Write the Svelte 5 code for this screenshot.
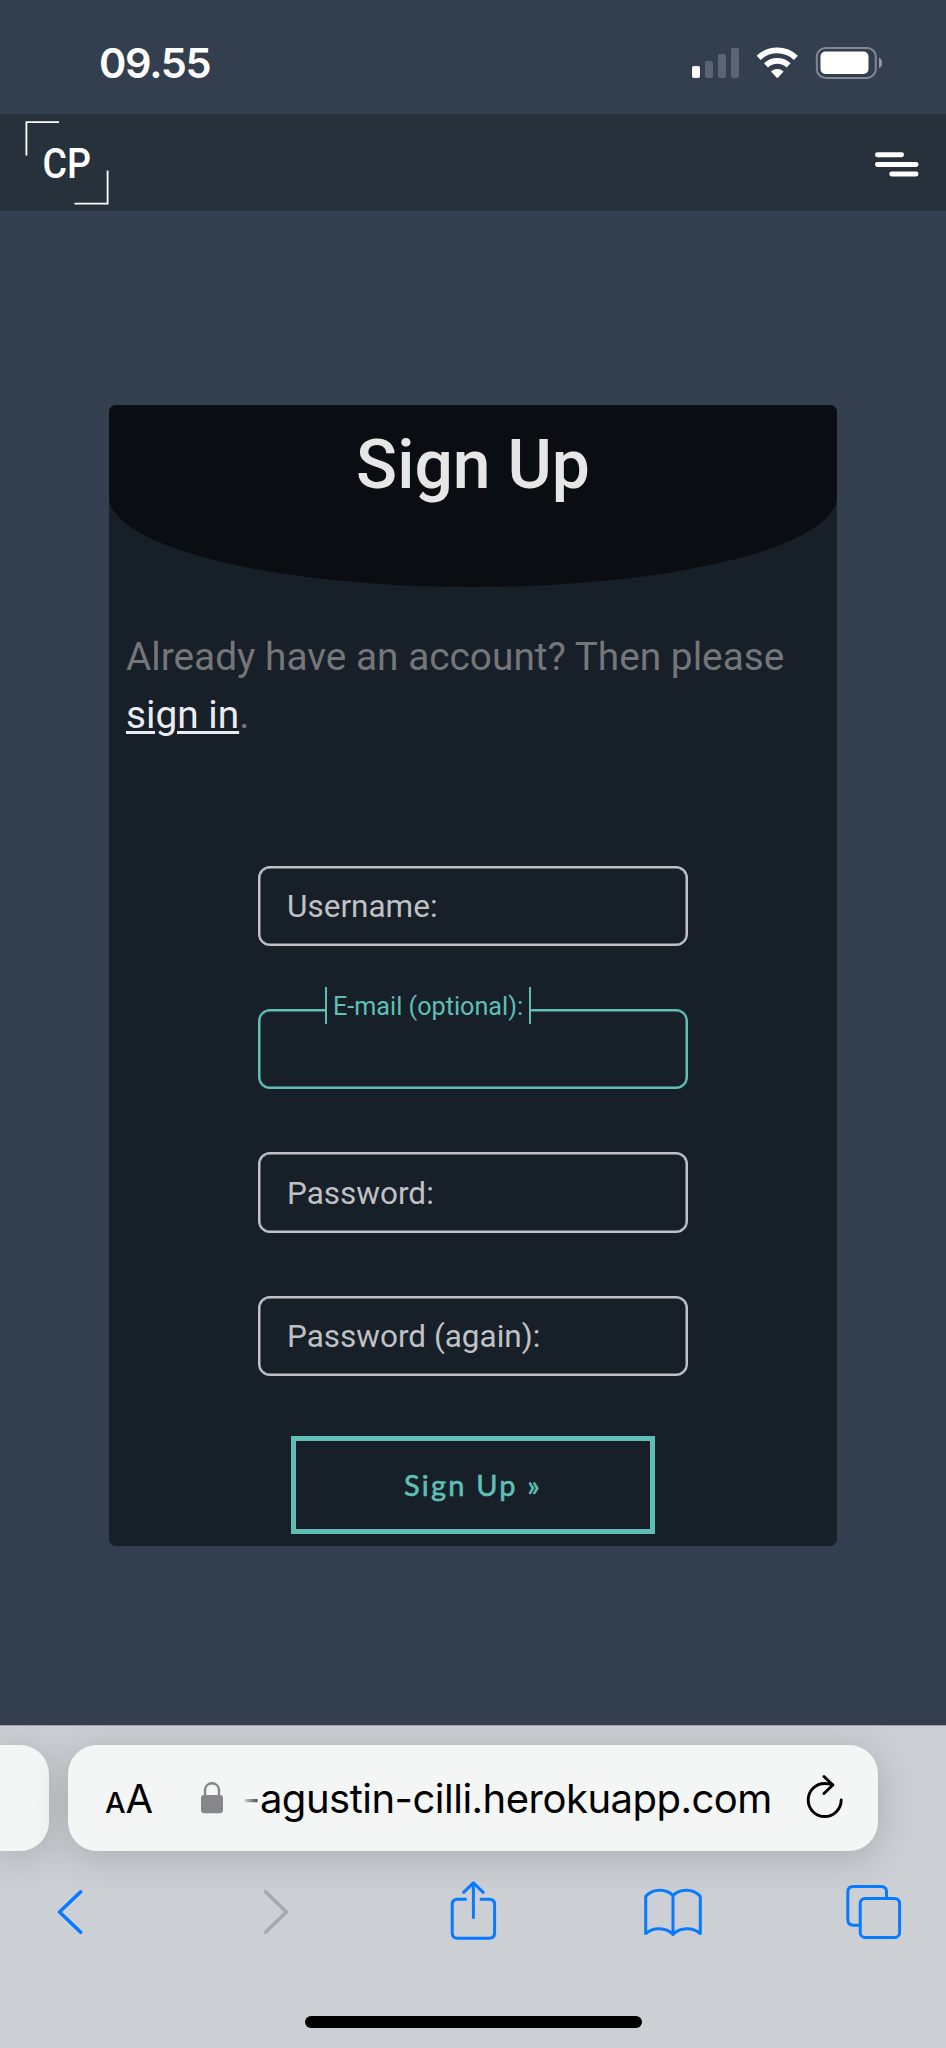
<script>
  const fields = [
    { label: 'Username:', active: false },
    { label: 'E-mail (optional):', active: true },
    { label: 'Password:', active: false },
    { label: 'Password (again):', active: false }
  ];
</script>

<div class="screen">
  <div class="status">
    <span class="time">09.55</span>
    <svg class="indicators" width="192" height="34" viewBox="691 46 192 34">
      <rect x="692" y="66" width="8" height="12" rx="2" fill="#fff" />
      <g fill="#5c6472">
        <rect x="705" y="61" width="8" height="17" rx="2" />
        <rect x="718" y="54" width="8" height="24" rx="2" />
        <rect x="731" y="47.7" width="8" height="30.3" rx="2" />
      </g>
      <g fill="none" stroke="#fff">
        <path d="M758.7 57.9a27 27 0 0 1 37.2 0" stroke-width="5.8" />
        <path d="M766 65.3a16.4 16.4 0 0 1 22.6 0" stroke-width="5.8" />
      </g>
      <path d="M771 71.4a9.2 9.2 0 0 1 12.6 0l-5.5 6.1a1.1 1.1 0 0 1-1.6 0z" fill="#fff" />
      <rect x="816.8" y="47.9" width="59" height="30" rx="8.8" fill="none" stroke="#818894" stroke-width="2" />
      <rect x="820.5" y="51.6" width="48" height="22.4" rx="5" fill="#fff" />
      <path d="M879 57.5c4.2 1.8 4.2 9 0 10.8z" fill="#9399a3" />
    </svg>
  </div>

  <nav class="nav">
    <svg class="logo" width="86" height="88" viewBox="24 119 86 88">
      <path d="M59 122.2H26.4V155.5M107.6 170.5V203.7H74.5" fill="none" stroke="#fff" stroke-width="1.8" />
      <text x="42.5" y="178.3" textLength="48.5" lengthAdjust="spacingAndGlyphs">CP</text>
    </svg>
    <svg class="menu" width="44" height="26" viewBox="875 151 44 26">
      <g fill="#fff">
        <rect x="875" y="152.2" width="29" height="5" rx="2.4" />
        <rect x="875" y="161.9" width="43.5" height="5" rx="2.4" />
        <rect x="889.3" y="171.5" width="29.2" height="5" rx="2.4" />
      </g>
    </svg>
  </nav>

  <main class="page">
    <section class="card">
      <header><h1>Sign Up</h1></header>
      <p class="hint">Already have an account? Then please <a href="#signin">sign in</a>.</p>
      <form>
        {#each fields as field}
          <div class="field" class:active={field.active}>
            <span class="label">{field.label}</span>
          </div>
        {/each}
        <button type="button">Sign Up »</button>
      </form>
    </section>
  </main>

  <footer class="browser">
    <div class="tabs">
      <div class="pill previous"></div>
      <div class="pill address">
        <span class="reader"><small>A</small>A</span>
        <svg class="lock" width="24" height="34" viewBox="200 1780 24 34">
          <rect x="201" y="1795" width="22" height="18.3" rx="3.2" fill="#87878b" />
          <path d="M205 1797v-6.5c0-9.6 14-9.6 14 0v6.5" fill="none" stroke="#87878b" stroke-width="2.4" />
        </svg>
        <span class="url"><span class="fade">-</span>agustin-cilli.herokuapp.com</span>
        <svg class="reload" width="40" height="46" viewBox="805 1774 40 46">
          <g fill="none" stroke="#000" stroke-width="2.9" stroke-linecap="round" stroke-linejoin="round">
            <path d="M841.2 1800a16.5 16.5 0 1 1-16.5-16.5c3 0 5.5.4 8 1.4" />
            <path d="M824 1776.5l8.8 8.5-8.8 8.5" />
          </g>
        </svg>
      </div>
    </div>
    <div class="tools">
      <svg width="60" height="62" viewBox="40 1880 60 62">
        <path d="M80.7 1891.8L59.5 1912L80.7 1932.2" class="blue thick" />
      </svg>
      <svg width="60" height="62" viewBox="241 1880 60 62">
        <path d="M265.5 1891.8L286.5 1912L265.5 1932.2" class="gray thick" />
      </svg>
      <svg width="60" height="62" viewBox="442 1880 60 62">
        <path d="M465.5 1899.3H457.5Q452.2 1899.3 452.2 1904.6V1933Q452.2 1938.2 457.5 1938.2H489.3Q494.6 1938.2 494.6 1933V1904.6Q494.6 1899.3 489.3 1899.3H481M473.4 1917.5V1883.5M463.6 1892.3L473.4 1882.8L483.2 1892.3" class="blue" />
      </svg>
      <svg width="60" height="62" viewBox="643 1880 60 62">
        <path d="M673 1895.5C667 1889 653 1887.5 645.7 1896.5V1933.5C653.5 1927 665.5 1927 673 1934.3C680.5 1927 692.5 1927 700.3 1933.5V1896.5C693 1887.5 679 1889 673 1895.5V1934" class="blue" />
      </svg>
      <svg width="60" height="62" viewBox="844 1880 60 62">
        <rect x="860.2" y="1898.4" width="39.4" height="39" rx="5" class="blue" />
        <path d="M859.5 1925.2H853.3Q847.8 1925.2 847.8 1919.6V1892.1Q847.8 1886.6 853.3 1886.6H881Q886.5 1886.6 886.5 1892.1V1897.6" class="blue" />
      </svg>
    </div>
    <div class="home"></div>
  </footer>
</div>

<style>
  :global(body) { margin: 0; background: #333e4e; }
  * { box-sizing: border-box; }
  .screen {
    width: 946px; height: 2048px; overflow: hidden;
    display: flex; flex-direction: column;
    background: #333e4e; font-family: Roboto, sans-serif;
  }
  svg { display: block; flex: none; }

  .status {
    height: 114px; padding: 12px 63px 0 99px;
    display: flex; align-items: center; justify-content: space-between;
  }
  .time { font: 600 41.5px/50px Inter, sans-serif; color: #fff; letter-spacing: -1.3px; }

  .nav {
    height: 97px; padding: 1px 27px 0 24px; background: #27313c;
    display: flex; align-items: center; justify-content: space-between;
  }
  .logo text { font: 500 43px Roboto, sans-serif; fill: #fff; }
  .menu { margin-top: 2px; }

  .page { flex: 1; padding: 194px 109px 0; }
  .card {
    height: 1141px; border-radius: 7px; overflow: hidden;
    background: #171f28; display: flex; flex-direction: column;
  }
  header {
    height: 182px; flex: none; background: #0a0d12;
    border-radius: 0 0 50% 50%; padding-top: 19px; text-align: center;
  }
  h1 { margin: 0; font-size: 67.8px; line-height: 82px; font-weight: 500; color: #e6e6e6; }
  .hint { margin: 41px 17px 0; font-size: 38.8px; line-height: 58.2px; color: #757679; }
  .hint a { color: #e9ecf2; text-decoration-thickness: 3px; text-underline-offset: 3px; }

  form { padding-top: 121.6px; display: flex; flex-direction: column; align-items: center; }
  .field {
    position: relative; width: 430px; height: 80.3px; margin-bottom: 62.9px; flex: none;
    border: 2px solid #bfc1c5; border-radius: 12px;
    box-shadow: inset 0 0 0 0.5px #bfc1c5;
    display: flex; align-items: center; padding: 0 27px;
  }
  .label { padding-top: 2px; font-size: 31.5px; line-height: 38px; color: #bfc1c5; white-space: nowrap; }
  .active { border-color: #5fbfb7; box-shadow: inset 0 0 0 0.5px #5fbfb7; }
  .active .label {
    position: absolute; left: 65px; top: -24px; width: 206px; height: 37px;
    border: solid #5fbfb7; border-width: 0 2px; background: #171f28; padding-top: 1px;
    color: #5fbfb7; font-size: 25.2px; text-align: center;
  }
  button {
    width: 364px; height: 98px; margin-top: -3px; padding: 0 0 1px;
    border: 5px solid #5fbfb7; background: transparent; color: #5fbfb7;
    font: 400 29px Lato, sans-serif; letter-spacing: 2.2px;
    -webkit-text-stroke: 0.6px #5fbfb7;
  }

  .browser {
    height: 323px; flex: none; border-top: 1px solid #9ca2aa; overflow: hidden;
    background: #cccfd4; display: flex; flex-direction: column; align-items: center;
  }
  .tabs { width: 946px; padding-top: 19px; display: flex; gap: 19px; }
  .pill { height: 106px; background: #f4f5f5; box-shadow: 0 6px 36px rgba(70, 76, 82, 0.26); }
  .previous { width: 49px; border-radius: 0 29px 29px 0; }
  .address {
    width: 810px; border-radius: 29px; padding: 0 33px 0 37px;
    display: flex; align-items: center; font-family: Inter, sans-serif; color: #000;
  }
  .reader { width: 95px; padding-top: 5px; font-size: 40px; line-height: 48px; white-space: nowrap; }
  .reader small { font-size: 29px; font-weight: 500; }
  .lock, .reload { margin-top: -2px; }
  .url {
    margin-left: 18px; padding-top: 1px; flex: 1; font-size: 40px; line-height: 48px;
    letter-spacing: -0.5px; white-space: nowrap;
  }
  .fade {
    background: linear-gradient(90deg, #e8e9ea, #333);
    -webkit-background-clip: text; background-clip: text; color: transparent;
  }
  .tools {
    width: 946px; height: 120px; padding: 0 42px 1px 40px;
    display: flex; align-items: center; justify-content: space-between;
  }
  .blue, .gray { fill: none; stroke: #087aff; stroke-width: 3; stroke-linecap: round; stroke-linejoin: round; }
  .gray { stroke: #a6a8ad; }
  .thick { stroke-width: 3.6; }
  .home { width: 337px; height: 12px; margin-top: 45px; border-radius: 6px; background: #000; }
</style>
